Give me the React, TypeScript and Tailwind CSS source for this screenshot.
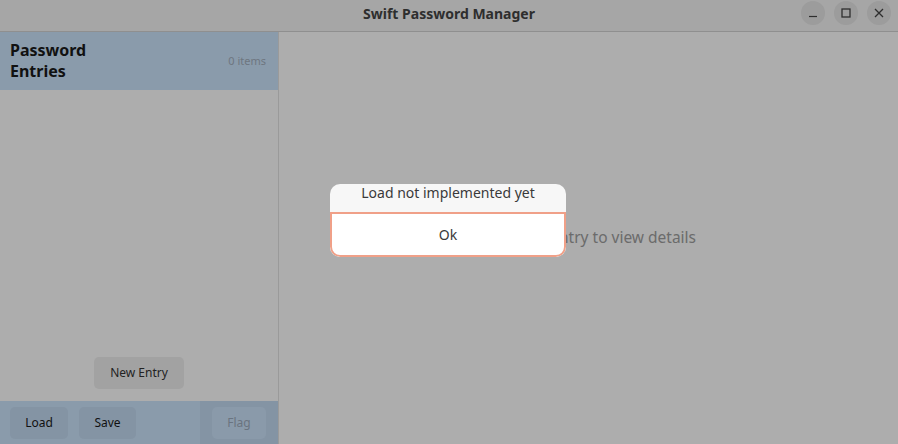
import React from 'react';

const font = { fontFamily: '"Noto Sans", "Open Sans", sans-serif' };

export default function App() {
  return (
    <div className="w-[898px] h-[444px] flex flex-col bg-[#adadad] overflow-hidden relative" style={font}>
      {/* title bar */}
      <div className="h-[32px] shrink-0 flex items-center relative bg-[#a6a6a6] border-b border-[#8f8f8f]">
        <div className="flex-1 text-center text-[14px] font-bold text-[#2e2e2e] pb-[5px]">Swift Password Manager</div>
        <div className="absolute right-[7px] top-[1px] flex gap-[9px]">
          <button className="w-[24px] h-[24px] rounded-full bg-[#9c9c9c] flex items-center justify-center">
            <svg width="10" height="10" viewBox="0 0 10 10"><path d="M1 8.5h8" stroke="#2e2e2e" strokeWidth="1.2" /></svg>
          </button>
          <button className="w-[24px] h-[24px] rounded-full bg-[#9c9c9c] flex items-center justify-center">
            <svg width="10" height="10" viewBox="0 0 10 10"><rect x="1" y="1" width="8" height="8" fill="none" stroke="#2e2e2e" strokeWidth="1.3" /></svg>
          </button>
          <button className="w-[24px] h-[24px] rounded-full bg-[#9c9c9c] flex items-center justify-center">
            <svg width="10" height="10" viewBox="0 0 10 10"><path d="M1 1l8 8M9 1l-8 8" stroke="#2e2e2e" strokeWidth="1.3" /></svg>
          </button>
        </div>
      </div>

      <div className="flex-1 flex min-h-0">
        {/* sidebar */}
        <div className="w-[279px] shrink-0 flex flex-col border-r border-[#9a9a9a]">
          <div className="h-[58px] bg-[#8a9bab] flex items-center justify-between px-[10px]">
            <div className="text-[16px] font-bold leading-[21px] text-[#111]">Password<br />Entries</div>
            <div className="text-[11px] text-[#6e7680] pr-[2px]">0 items</div>
          </div>
          <div className="flex-1 flex flex-col items-center justify-end pb-[12px]">
            <button className="w-[90px] h-[32px] rounded-[5px] bg-[#a2a2a2] text-[12px] text-[#222]">New Entry</button>
          </div>
          <div className="h-[43px] flex bg-[#8a9bab]">
            <div className="flex-1 flex items-center gap-[11px] px-[10px]">
              <button className="w-[58px] h-[32px] rounded-[5px] bg-[#8494a4] text-[12px] text-[#111]">Load</button>
              <button className="w-[57px] h-[32px] rounded-[5px] bg-[#8494a4] text-[12px] text-[#111]">Save</button>
            </div>
            <div className="w-[78px] bg-[#8494a4] flex items-center pl-[12px]">
              <button className="w-[54px] h-[32px] rounded-[5px] bg-[#8a9aaa] text-[12px] text-[#6a7480]">Flag</button>
            </div>
          </div>
        </div>

        {/* main */}
        <div className="flex-1 flex items-center justify-center">
          <div className="text-[15.5px] text-[#6b6b6b]">Select an entry to view details</div>
        </div>
      </div>

      {/* dialog */}
      <div className="absolute left-[330px] top-[184px] w-[236px] rounded-[10px] bg-[#f7f7f7] overflow-hidden">
        <div className="h-[28px] leading-[18px] text-center text-[14px] text-[#3a3a3a]">Load not implemented yet</div>
        <button className="w-full h-[45px] bg-white border-2 border-[#f0a088] rounded-b-[10px] text-[14px] text-[#3a3a3a]">Ok</button>
      </div>
    </div>
  );
}
